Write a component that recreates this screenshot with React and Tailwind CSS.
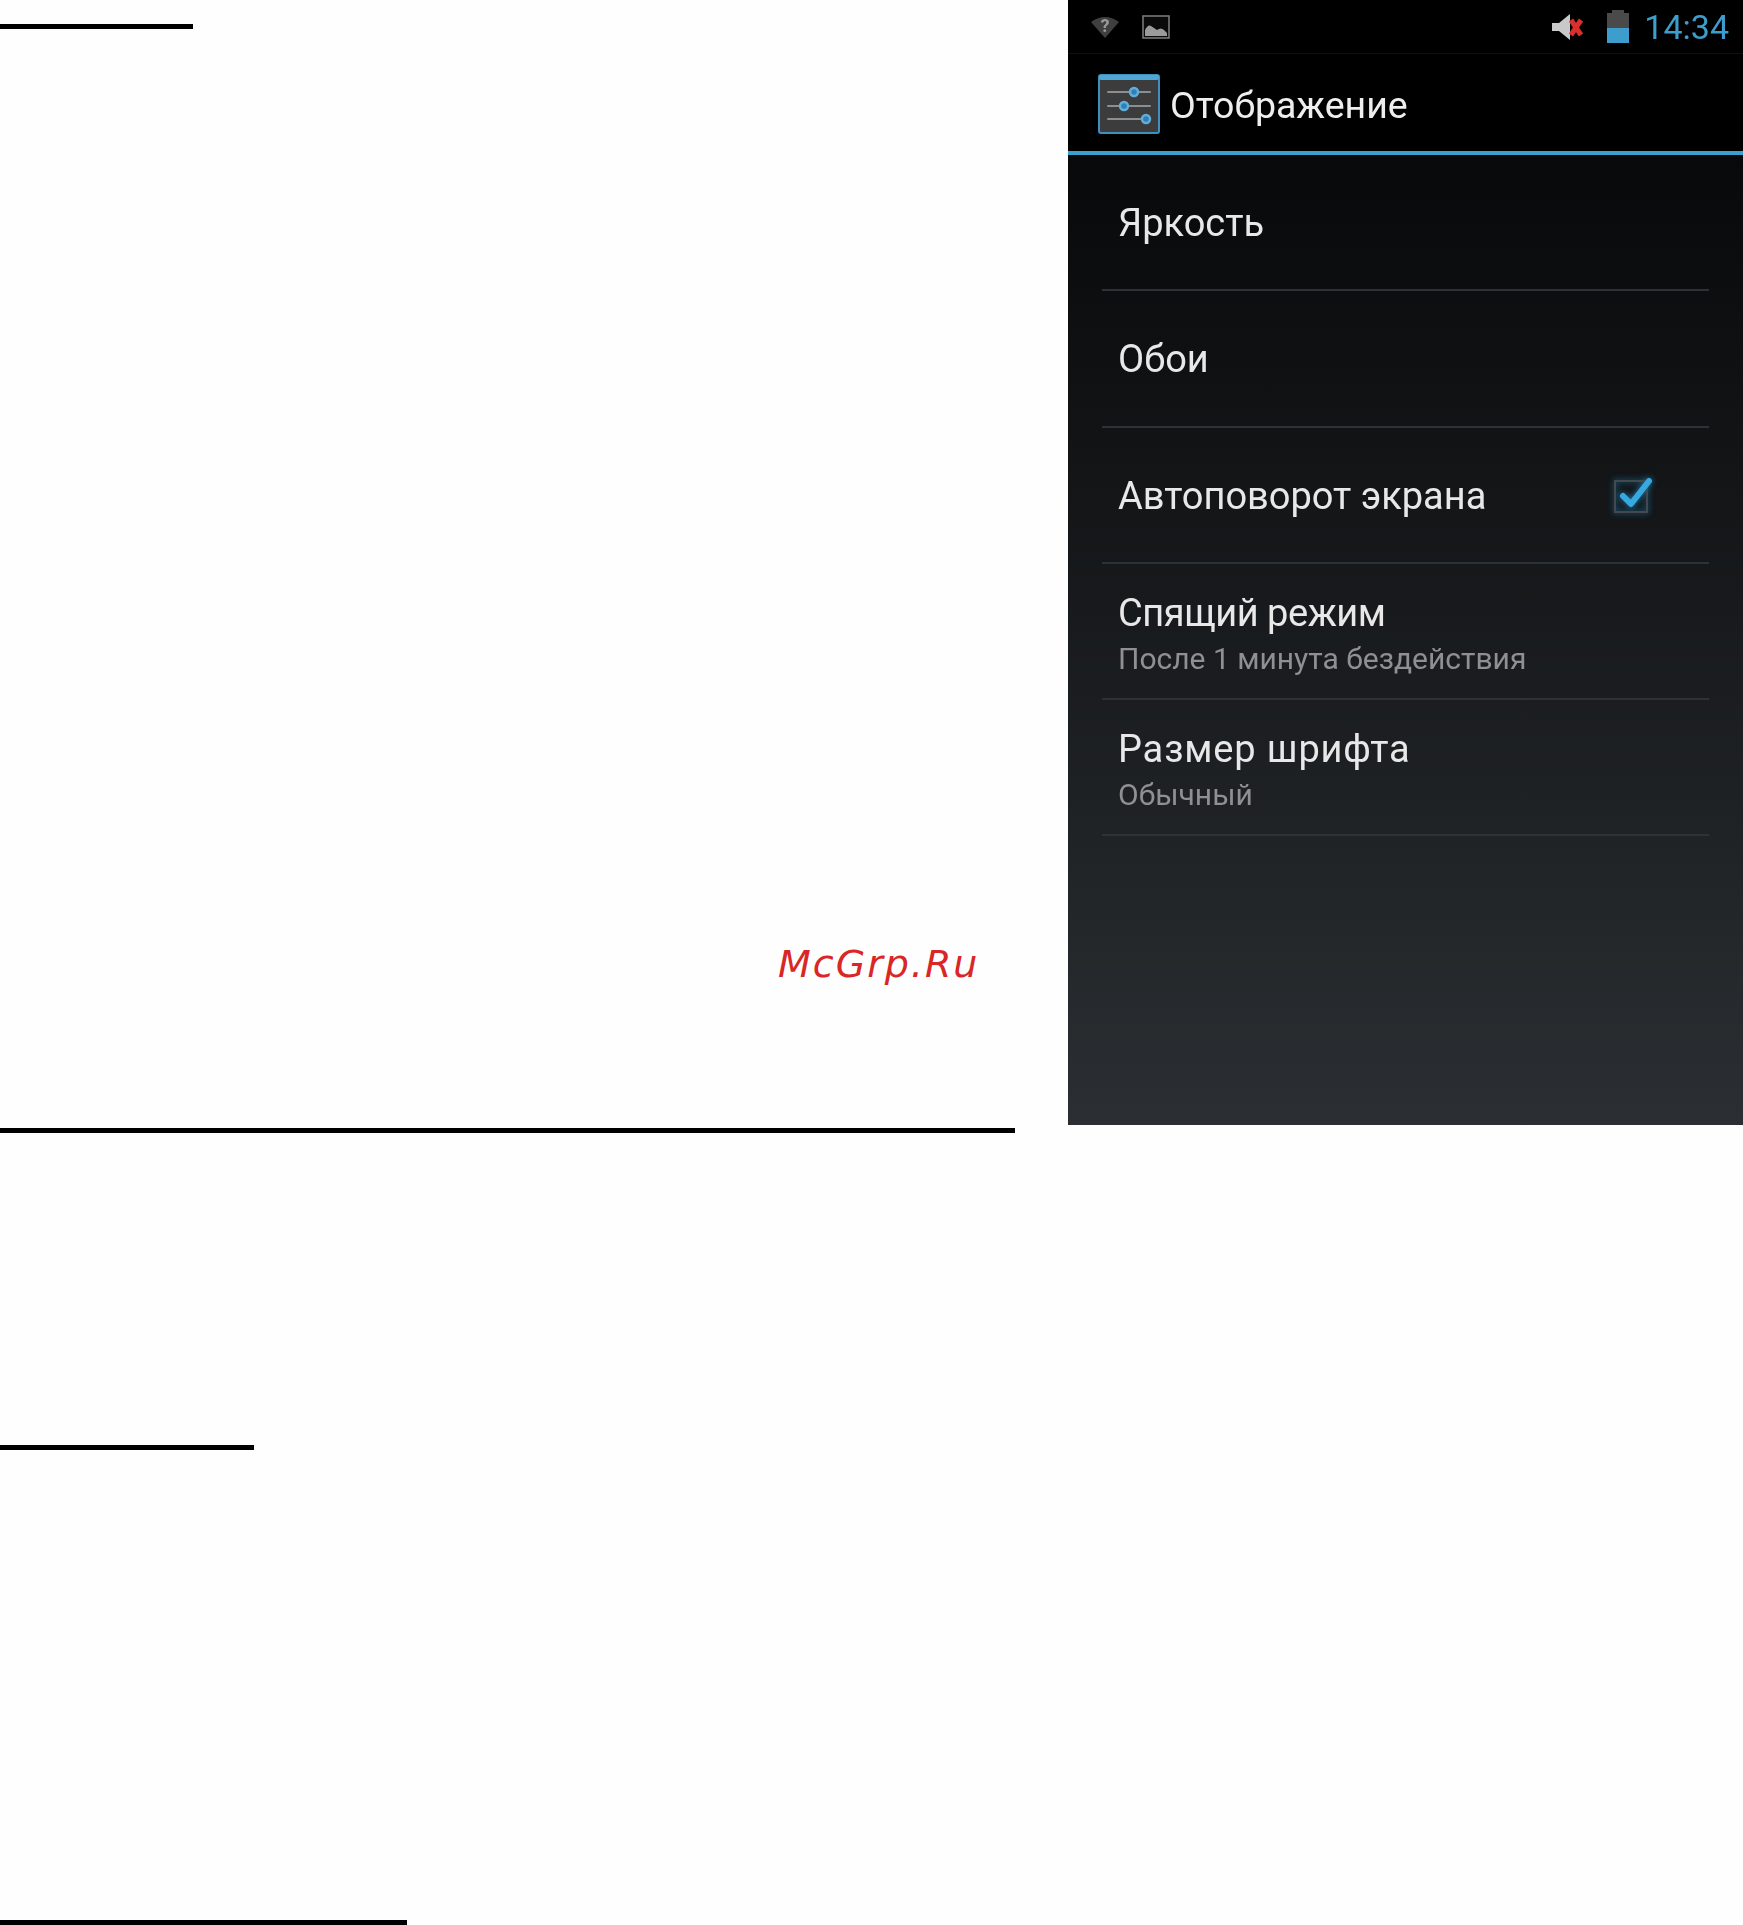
import React from 'react';

const rows = [
  { title: 'Яркость', tracking: 'tracking-normal' },
  { title: 'Обои', tracking: 'tracking-normal' },
  { title: 'Автоповорот экрана', tracking: 'tracking-normal', checked: true },
  { title: 'Спящий режим', tracking: 'tracking-[-0.45px]', sub: 'После 1 минута бездействия' },
  { title: 'Размер шрифта', tracking: 'tracking-[0.85px]', sub: 'Обычный' },
];

function WifiUnknown() {
  return (
    <svg width="30" height="24" viewBox="0 0 30 24" className="blur-[0.7px]">
      <path d="M1 7 Q15 -3 29 7 L15 23 Z" fill="#3f3f3f" />
      <text x="15" y="17" textAnchor="middle" fontSize="18" fontWeight="700" fontFamily="Roboto, sans-serif" fill="#9a9a9a">?</text>
    </svg>
  );
}

function PictureIcon() {
  return (
    <svg width="28" height="24" viewBox="0 0 28 24" className="blur-[0.5px]">
      <rect x="1" y="1" width="26" height="22" fill="#0a0a0a" stroke="#777" strokeWidth="1.6" />
      <path d="M3 21 V15 Q6 9 9 11 Q12 13 15 15 Q19 12 22 15 L25 18 V21 Z" fill="#9a9a9a" />
    </svg>
  );
}

function MuteIcon() {
  return (
    <svg width="34" height="28" viewBox="0 0 34 28" className="blur-[0.6px]">
      <path d="M0 10 H7 L18 1 V27 L7 18 H0 Z" fill="#c9c9c9" />
      <path d="M19 7 L29 22 M29 7 L19 22" stroke="#d9302e" strokeWidth="5" />
    </svg>
  );
}

function BatteryIcon() {
  return (
    <div className="flex flex-col items-center w-[22px] blur-[0.5px]">
      <div className="w-[12px] h-[3px] bg-[#4a4a4a]" />
      <div className="w-[22px] h-[15px] bg-[#4a4a4a]" />
      <div className="w-[22px] h-[15px] bg-[#3d9dcc]" />
    </div>
  );
}

function SettingsIcon() {
  return (
    <svg width="62" height="60" viewBox="0 0 62 60" className="blur-[0.6px]">
      <rect x="1" y="1" width="60" height="58" rx="2" fill="#3c3c3d" stroke="#3f8fbc" strokeWidth="2" />
      <rect x="1" y="1" width="60" height="5" rx="2" fill="#4fa6d6" />
      <g stroke="#8a8f93" strokeWidth="2" strokeLinecap="round">
        <path d="M10 18 H52" />
        <path d="M10 32 H52" />
        <path d="M10 45 H52" />
      </g>
      <g fill="#2f7fb8" stroke="#63aed8" strokeWidth="2.5">
        <circle cx="36" cy="18" r="4" />
        <circle cx="26" cy="32" r="4" />
        <circle cx="48" cy="45" r="4" />
      </g>
    </svg>
  );
}

function CheckIcon() {
  return (
    <svg width="42" height="38" viewBox="0 0 42 38" className="blur-[0.5px] drop-shadow-[0_0_3px_#1d7fb0]">
      <rect x="2" y="5" width="32" height="31" fill="none" stroke="#44494d" strokeWidth="2" />
      <path d="M10 20 L18 28 L36 5" fill="none" stroke="#36a9e1" strokeWidth="6" strokeLinecap="round" strokeLinejoin="round" />
    </svg>
  );
}

export default function App() {
  return (
    <div className="flex w-[1743px] h-[1925px] overflow-hidden bg-[#fefefe]">
      {/* document rules and watermark */}
      <div className="w-[1015px] shrink-0">
        <div className="mt-[24px] h-[5px] w-[193px] bg-black" />
        <p
          className="mt-[905px] pl-[778px] h-[60px] text-[38px] leading-[60px] italic tracking-[2px] text-[#d92626] whitespace-nowrap"
          style={{ fontFamily: '"DejaVu Sans", sans-serif' }}
        >
          McGrp.Ru
        </p>
        <div className="mt-[134px] h-[5px] w-full bg-black" />
        <div className="mt-[312px] h-[5px] w-[254px] bg-black" />
        <div className="mt-[470px] h-[5px] w-[407px] bg-black" />
      </div>

      {/* phone screenshot */}
      <div
        className="ml-[53px] w-[675px] h-[1125px] shrink-0 flex flex-col bg-black text-[#ececec]"
        style={{ fontFamily: 'Roboto, sans-serif' }}
      >
        <div className="h-[54px] shrink-0 flex items-center justify-between border-b border-[#101010] pl-[22px] pr-[14px]">
          <div className="flex items-center gap-[22px]">
            <WifiUnknown />
            <PictureIcon />
          </div>
          <div className="flex items-center">
            <MuteIcon />
            <div className="ml-[21px]"><BatteryIcon /></div>
            <span className="ml-[15px] text-[34px] leading-none text-[#3d9dcc] blur-[0.5px]">14:34</span>
          </div>
        </div>

        <div className="h-[97px] shrink-0 flex items-center pl-[30px] pt-[3px]">
          <SettingsIcon />
          <span className="ml-[10px] pt-[3px] text-[37.5px] text-[#eeeeee] blur-[0.5px]">Отображение</span>
        </div>
        <div className="h-[4px] shrink-0 bg-[#3b9fd0]" />

        <div className="flex-1 bg-gradient-to-b from-[#08090a] to-[#2b2f33]">
          {rows.map((row) => (
            <div key={row.title} className="h-[136.25px] mx-[34px] pl-[16px] pr-[54px] border-b-2 border-[#2e3236] flex items-center justify-between">
              <div className={row.sub ? 'pt-[6px] blur-[0.5px]' : 'pt-[2px] blur-[0.5px]'}>
                <div className={`text-[38px] leading-[44px] text-[#e8e8e8] ${row.tracking}`}>{row.title}</div>
                {row.sub && <div className="mt-[6px] text-[30px] leading-[36px] text-[#8e9092]">{row.sub}</div>}
              </div>
              {row.checked && <CheckIcon />}
            </div>
          ))}
        </div>
      </div>
    </div>
  );
}
